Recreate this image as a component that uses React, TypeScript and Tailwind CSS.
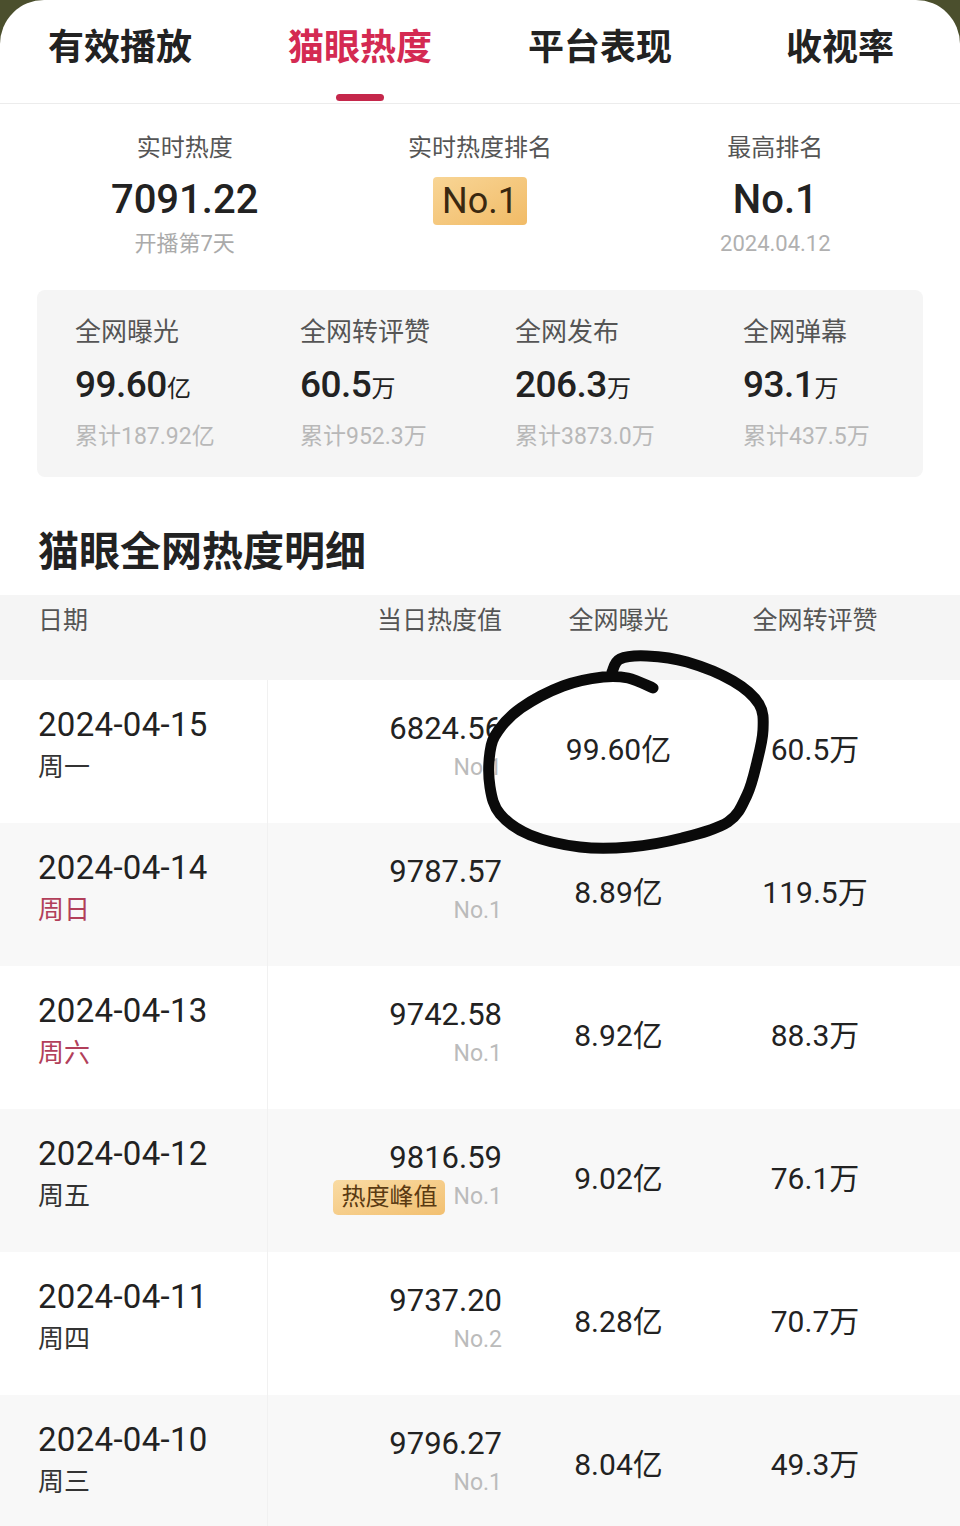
import React from 'react';

const tabs = ['有效播放', '猫眼热度', '平台表现', '收视率'];

const overview = [
  { label: '全网曝光', value: '99.60', unit: '亿', total: '累计187.92亿' },
  { label: '全网转评赞', value: '60.5', unit: '万', total: '累计952.3万' },
  { label: '全网发布', value: '206.3', unit: '万', total: '累计3873.0万' },
  { label: '全网弹幕', value: '93.1', unit: '万', total: '累计437.5万' },
];

const rows = [
  { date: '2024-04-15', week: '周一', heat: '6824.56', rank: 'No.1', exposure: '99.60亿', likes: '60.5万' },
  { date: '2024-04-14', week: '周日', heat: '9787.57', rank: 'No.1', exposure: '8.89亿', likes: '119.5万', weekend: true },
  { date: '2024-04-13', week: '周六', heat: '9742.58', rank: 'No.1', exposure: '8.92亿', likes: '88.3万', weekend: true },
  { date: '2024-04-12', week: '周五', heat: '9816.59', rank: 'No.1', exposure: '9.02亿', likes: '76.1万', peak: true },
  { date: '2024-04-11', week: '周四', heat: '9737.20', rank: 'No.2', exposure: '8.28亿', likes: '70.7万' },
  { date: '2024-04-10', week: '周三', heat: '9796.27', rank: 'No.1', exposure: '8.04亿', likes: '49.3万' },
];

// hand drawn loop around the exposure value, page coordinates
const loop: [number, number][] = [
  [612, 672], [620, 659], [647, 656], [687, 662], [733, 681], [759, 704], [763, 730],
  [757, 762], [747, 795], [728, 822], [682, 838], [630, 847], [580, 847], [530, 835],
  [500, 814], [490, 787], [490, 752], [498, 731], [521, 708], [563, 686], [603, 677],
  [628, 678], [653, 688],
];

function smoothPath(pts: [number, number][]) {
  let d = `M${pts[0][0]},${pts[0][1]}`;
  for (let i = 0; i < pts.length - 1; i++) {
    const p0 = pts[i - 1] || pts[i];
    const p1 = pts[i];
    const p2 = pts[i + 1];
    const p3 = pts[i + 2] || p2;
    const c1x = p1[0] + (p2[0] - p0[0]) / 6;
    const c1y = p1[1] + (p2[1] - p0[1]) / 6;
    const c2x = p2[0] - (p3[0] - p1[0]) / 6;
    const c2y = p2[1] - (p3[1] - p1[1]) / 6;
    d += ` C${c1x},${c1y} ${c2x},${c2y} ${p2[0]},${p2[1]}`;
  }
  return d;
}

const App = () => {
  return (
    <div className="relative min-h-screen bg-[#4b4f2d] font-['Roboto','Noto_Sans_CJK_SC',sans-serif] text-[#222]">
      <div className="rounded-t-[44px] bg-white">
        {/* Tabs */}
        <div className="grid grid-cols-4 border-b border-[#ececec] pt-[26px] pb-[2px]">
          {tabs.map((tab, i) => (
            <div key={tab} className="flex flex-col items-center">
              <span
                className={`text-[36px] font-bold leading-[44px] ${
                  i === 1 ? 'text-[#d42a52]' : 'text-[#222]'
                }`}
              >
                {tab}
              </span>
              <span
                className={`mt-[24px] h-[7px] w-[48px] rounded-full ${
                  i === 1 ? 'bg-[#c5274b]' : 'bg-transparent'
                }`}
              />
            </div>
          ))}
        </div>

        {/* Realtime summary */}
        <div className="grid grid-cols-3 px-[37px] pt-[28px]">
          <div className="flex flex-col items-center">
            <span className="text-[24px] leading-[32px] text-[#555]">实时热度</span>
            <span className="mt-[12px] text-[40px] font-medium leading-[48px]">7091.22</span>
            <span className="mt-[6px] text-[22px] leading-[28px] text-[#aaa]">开播第7天</span>
          </div>
          <div className="flex flex-col items-center">
            <span className="text-[24px] leading-[32px] text-[#555]">实时热度排名</span>
            <span className="mt-[13px] flex h-[48px] w-[94px] items-center justify-center rounded-[4px] bg-gradient-to-br from-[#f8d595] to-[#f1bb66] text-[36px] leading-none text-[#3a2810]">
              No.1
            </span>
          </div>
          <div className="flex flex-col items-center">
            <span className="text-[24px] leading-[32px] text-[#555]">最高排名</span>
            <span className="mt-[12px] text-[40px] font-medium leading-[48px]">No.1</span>
            <span className="mt-[6px] text-[22px] leading-[28px] text-[#b0b0b0]">2024.04.12</span>
          </div>
        </div>

        {/* Overview card */}
        <div className="mx-[37px] mt-[32px] grid grid-cols-[225px_215px_228px_1fr] rounded-[8px] bg-[#f5f5f5] px-[38px] pt-[25px] pb-[25px]">
          {overview.map((item) => (
            <div key={item.label} className="flex flex-col">
              <span className="text-[26px] leading-[34px] text-[#555]">{item.label}</span>
              <span className="mt-[13px] leading-[46px]">
                <span className="text-[37px] font-medium tracking-[-0.5px]">{item.value}</span>
                <span className="text-[24px]">{item.unit}</span>
              </span>
              <span className="mt-[7px] text-[23px] leading-[30px] text-[#b8b8b8]">{item.total}</span>
            </div>
          ))}
        </div>

        {/* Detail table */}
        <h2 className="mt-[51px] pl-[38px] text-[41px] font-bold leading-[48px]">猫眼全网热度明细</h2>

        <div className="mt-[19px]">
          <div className="grid h-[85px] grid-cols-[268px_234px_233px_160px] bg-[#f5f5f5] pt-[9px] text-[25px] leading-[34px] text-[#555]">
            <span className="pl-[38px]">日期</span>
            <span className="text-right">当日热度值</span>
            <span className="text-center">全网曝光</span>
            <span className="text-center">全网转评赞</span>
          </div>

          {rows.map((row, i) => (
            <div
              key={row.date}
              className={`grid h-[143px] grid-cols-[268px_234px_233px_160px] items-center ${
                i % 2 === 1 ? 'bg-[#f8f8f8]' : 'bg-white'
              }`}
            >
              <div className="flex h-full flex-col justify-center border-r border-[#f1f1f1] pl-[38px] pb-[14px]">
                <span className="text-[33px] leading-[40px] tracking-[0.3px]">{row.date}</span>
                <span
                  className={`mt-[5px] text-[26px] leading-[34px] ${
                    row.weekend ? 'text-[#b23f5a]' : 'text-[#333]'
                  }`}
                >
                  {row.week}
                </span>
              </div>
              <div className="flex flex-col items-end pb-[8px]">
                <span className="text-[31px] leading-[38px]">{row.heat}</span>
                <div className="mt-[3px] flex items-center gap-[8px]">
                  {row.peak && (
                    <span className="rounded-[5px] bg-gradient-to-br from-[#f9dba3] to-[#f2c071] px-[8px] text-[24px] leading-[35px] text-[#5a3a12]">
                      热度峰值
                    </span>
                  )}
                  <span className="text-[23px] leading-[34px] text-[#bbb]">{row.rank}</span>
                </div>
              </div>
              <span className="pb-[4px] text-center text-[30px] leading-[38px]">{row.exposure}</span>
              <span className="pb-[4px] text-center text-[30px] leading-[38px]">{row.likes}</span>
            </div>
          ))}
        </div>
      </div>

      {/* Hand-drawn annotation */}
      <svg
        className="pointer-events-none absolute top-0 left-0"
        width="960"
        height="900"
        viewBox="0 0 960 900"
        fill="none"
      >
        <path d={smoothPath(loop)} stroke="#0a0a0a" strokeWidth="11" strokeLinecap="round" strokeLinejoin="round" />
      </svg>
    </div>
  );
};

export default App;
